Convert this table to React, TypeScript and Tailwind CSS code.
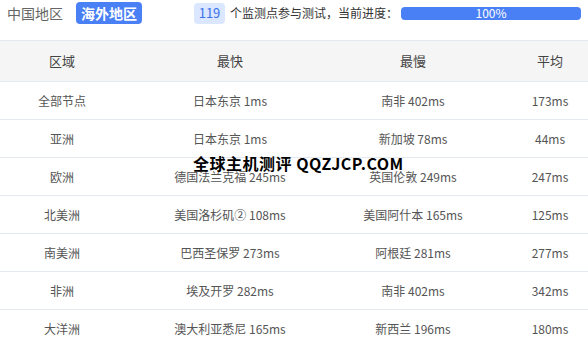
import React from 'react';

const rows = [
  ['全部节点', '日本东京 1ms', '南非 402ms', '173ms'],
  ['亚洲', '日本东京 1ms', '新加坡 78ms', '44ms'],
  ['欧洲', '德国法兰克福 245ms', '英国伦敦 249ms', '247ms'],
  ['北美洲', '美国洛杉矶② 108ms', '美国阿什本 165ms', '125ms'],
  ['南美洲', '巴西圣保罗 273ms', '阿根廷 281ms', '277ms'],
  ['非洲', '埃及开罗 282ms', '南非 402ms', '342ms'],
  ['大洋洲', '澳大利亚悉尼 165ms', '新西兰 196ms', '180ms'],
];

const cols = 'grid grid-cols-[124px_212px_154px_120px]';

export default function App() {
  return (
    <div className="relative w-[588px] h-[340px] overflow-hidden bg-white text-[#333] font-['Noto_Sans_CJK_SC','Noto_Sans',sans-serif]">
      {/* top bar */}
      <div className="flex items-center h-[40px] pb-[14px] pl-[7px] text-[14px] whitespace-nowrap">
        <span className="shrink-0 text-[#666]">中国地区</span>
        <span className="shrink-0 ml-[13px] h-[22px] px-[5px] flex items-center rounded-[4px] bg-[#4a80f5] text-white font-bold text-[14px]">海外地区</span>
        <span className="shrink-0 ml-[52px] h-[21px] w-[31px] flex items-center justify-center rounded-[4px] bg-[#dbe7fe] text-[#3b73ee] text-[13px]">119</span>
        <span className="shrink-0 ml-[5px] text-[12px] text-[#333]">个监测点参与测试，当前进度：</span>
        <div className="shrink-0 ml-[3px] w-[180px] h-[13px] rounded-[4px] bg-[#4a80f5] flex items-center justify-center text-white text-[12px] leading-none">100%</div>
      </div>

      {/* table */}
      <div className="border-t border-[#e4e9f0]">
        <div className={`${cols} h-[41px] items-center bg-[#f5f5f5] border-b border-[#e4e9f0] text-[13px] text-[#444]`}>
          <div className="text-center">区域</div>
          <div className="text-center">最快</div>
          <div className="text-center">最慢</div>
          <div className="text-center">平均</div>
        </div>
        {rows.map((r, i) => (
          <div key={i} className={`${cols} h-[38px] items-center border-b border-[#e4e9f0] text-[12px] text-[#555]`}>
            {r.map((c, j) => (
              <div key={j} className="text-center whitespace-nowrap">{c}</div>
            ))}
          </div>
        ))}
      </div>

      {/* watermark */}
      <div className="absolute left-[193px] top-[155px] text-[16px] font-bold text-black leading-none tracking-[0.5px] whitespace-nowrap">
        全球主机测评 QQZJCP.COM
      </div>
    </div>
  );
}
